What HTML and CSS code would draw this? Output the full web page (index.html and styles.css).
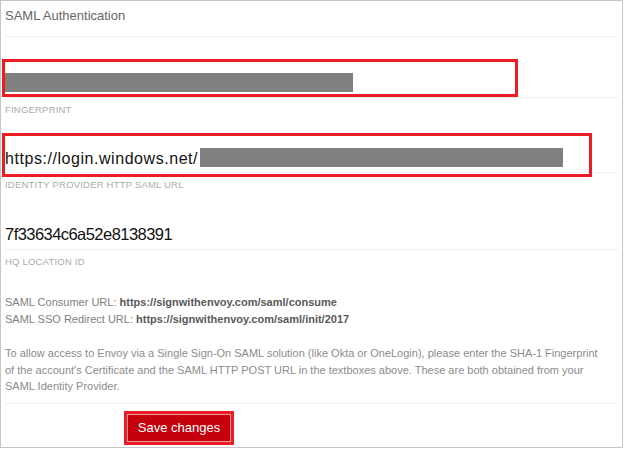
FILE: index.html
```html
<!DOCTYPE html>
<html>
<head>
<meta charset="utf-8">
<link rel="stylesheet" href="styles.css">
</head>
<body>
<div class="panel">
  <div class="header">SAML Authentication</div>

  <div class="field">
    <div class="value-row row-fp">
      <span class="redact redact-fp"></span>
    </div>
    <span class="mark mark-fp"></span>
  </div>
  <div class="label">FINGERPRINT</div>

  <div class="field">
    <div class="value-row row-url">
      <span class="value value-url">https://login.windows.net/</span>
      <span class="redact redact-url"></span>
    </div>
    <span class="mark mark-url"></span>
  </div>
  <div class="label">IDENTITY PROVIDER HTTP SAML URL</div>

  <div class="field">
    <div class="value-row row-hq">
      <span class="value value-hq">7f33634c6a52e8138391</span>
    </div>
  </div>
  <div class="label">HQ LOCATION ID</div>

  <div class="info">
    <p class="urls">SAML Consumer URL: <b>https://signwithenvoy.com/saml/consume</b><br>SAML SSO Redirect URL: <b>https://signwithenvoy.com/saml/init/2017</b></p>
    <p class="help">To allow access to Envoy via a Single Sign-On SAML solution (like Okta or OneLogin), please enter the SHA-1 Fingerprint<br>of the account's Certificate and the SAML HTTP POST URL in the textboxes above. These are both obtained from your<br>SAML Identity Provider.</p>
  </div>

  <div class="actions">
    <button class="save">Save changes</button>
  </div>
</div>
</body>
</html>
```

FILE: styles.css
```css
html, body {
  margin: 0;
  padding: 0;
  background: #fff;
}

.panel {
  width: 623px;
  height: 448px;
  box-sizing: border-box;
  border: 1px solid #c6c6c6;
  padding: 0 4px;
  font-family: "Liberation Sans", Arial, sans-serif;
  overflow: hidden;
}

.header {
  height: 36px;
  box-sizing: border-box;
  padding-top: 7px;
  font-size: 13px;
  line-height: 16px;
  color: #666;
  border-bottom: 1px solid #efefef;
}

.field {
  position: relative;
}

.value-row {
  display: flex;
  align-items: flex-end;
  border-bottom: 1px solid #efefef;
  padding-bottom: 5px;
  box-sizing: content-box;
}

.row-fp { height: 55px; }
.row-url { height: 51px; }
.row-hq { height: 53px; }

.redact {
  display: block;
  background: #808080;
  height: 19px;
}

.redact-fp { width: 348px; }
.redact-url { width: 363px; margin-left: 2px; }

.value {
  color: #111;
  white-space: nowrap;
}

.value-url {
  font-size: 16px;
  line-height: 17px;
  padding-top: 2px;
  letter-spacing: 0.55px;
}

.value-hq {
  font-size: 16.5px;
  line-height: 20px;
  letter-spacing: -0.55px;
  font-weight: 500;
}

.mark {
  position: absolute;
  left: -3px;
  box-sizing: border-box;
  border: 3px solid #ec1c24;
}

.mark-fp {
  top: 22px;
  width: 516px;
  height: 38px;
}

.mark-url {
  top: 17px;
  width: 590px;
  height: 44px;
}

.label {
  height: 18px;
  box-sizing: border-box;
  padding-top: 6px;
  font-size: 9.5px;
  line-height: 12px;
  letter-spacing: 0.2px;
  color: #ababab;
}

.info {
  padding-top: 26px;
  padding-bottom: 8px;
  border-bottom: 1px solid #efefef;
}

.info p {
  margin: 0;
  font-size: 11px;
  white-space: nowrap;
}

.urls {
  line-height: 17px;
  color: #808080;
}

.urls b {
  color: #595959;
  font-weight: bold;
}

.help {
  margin-top: 17px !important;
  line-height: 16.5px;
  color: #8c8c8c;
}

.actions {
  padding-top: 10px;
  padding-left: 122px;
}

.save {
  display: block;
  width: 104px;
  height: 28px;
  box-sizing: border-box;
  border: 1px solid #e59a9a;
  outline: 3px solid #ec1c24;
  background: #c4000c;
  color: #fff;
  font-family: "Liberation Sans", Arial, sans-serif;
  font-size: 13px;
  padding: 0;
  line-height: 26px;
  text-align: center;
}
```
